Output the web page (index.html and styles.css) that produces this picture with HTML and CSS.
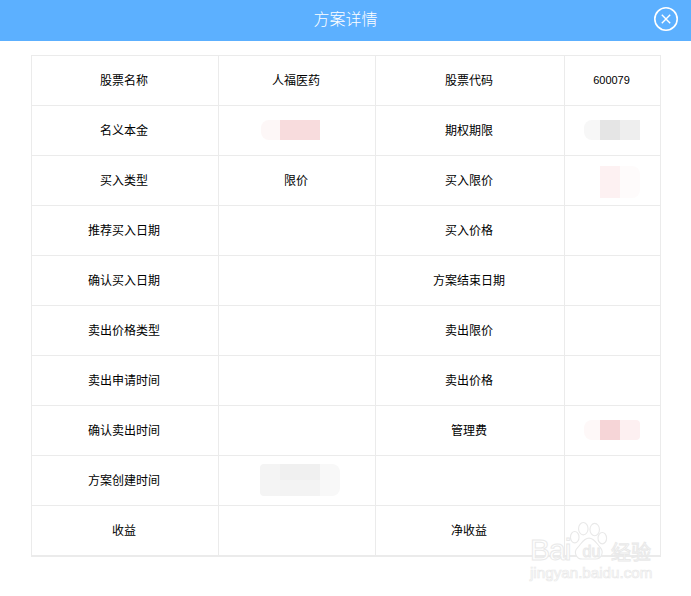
FILE: index.html
```html
<!DOCTYPE html>
<html lang="zh">
<head>
<meta charset="utf-8">
<title>方案详情</title>
<link rel="stylesheet" href="styles.css">
</head>
<body>
<div class="dialog">
  <header class="head">
    <h1 class="title">方案详情</h1>
    <button class="close" aria-label="关闭">
      <svg width="26" height="26" viewBox="0 0 26 26" fill="none" stroke="#fff">
        <circle cx="13" cy="13" r="11.2" stroke-width="1.6"/>
        <path d="M8.8 8.8 17.2 17.2M17.2 8.8 8.8 17.2" stroke-width="1.4"/>
      </svg>
    </button>
  </header>
  <table class="grid">
    <colgroup><col class="c1"><col class="c2"><col class="c3"><col class="c4"></colgroup>
    <tr><td>股票名称</td><td>人福医药</td><td>股票代码</td><td class="code">600079</td></tr>
    <tr><td>名义本金</td><td><div class="blur b-amount"><i class="t1"></i><i class="t2"></i></div></td><td>期权期限</td><td><div class="blur b-term"><i class="t1"></i><i class="t2"></i><i class="t3"></i></div></td></tr>
    <tr><td>买入类型</td><td>限价</td><td>买入限价</td><td><div class="blur b-limit"><i class="t1"></i><i class="t2"></i></div></td></tr>
    <tr><td>推荐买入日期</td><td></td><td>买入价格</td><td></td></tr>
    <tr><td>确认买入日期</td><td></td><td>方案结束日期</td><td></td></tr>
    <tr><td>卖出价格类型</td><td></td><td>卖出限价</td><td></td></tr>
    <tr><td>卖出申请时间</td><td></td><td>卖出价格</td><td></td></tr>
    <tr><td>确认卖出时间</td><td></td><td>管理费</td><td><div class="blur b-fee"><i class="t1"></i><i class="t2"></i><i class="t3"></i></div></td></tr>
    <tr><td>方案创建时间</td><td><div class="blur b-date"><i class="t1"></i><i class="t2"></i><i class="t3"></i></div></td><td></td><td></td></tr>
    <tr><td>收益</td><td></td><td>净收益</td><td></td></tr>
  </table>
</div>
<div class="mark">
  <svg class="paw" width="38" height="40" viewBox="0 0 40 42" fill="#fff" stroke="#e9e9e9" stroke-width="1.2">
    <ellipse cx="14" cy="8" rx="5" ry="6.5"/>
    <ellipse cx="26" cy="9" rx="5" ry="6.5"/>
    <ellipse cx="5" cy="17" rx="4.5" ry="6"/>
    <ellipse cx="34" cy="18" rx="4.5" ry="6"/>
    <path d="M20 18c6 0 8 6 12 10 4 5 1 12-5 12H13C7 40 3 33 8 28c4-4 6-10 12-10Z"/>
  </svg>
  <div class="mark-row"><span class="mark-bai">Bai</span><span class="mark-du">du</span><span class="mark-jy">经验</span></div>
  <div class="mark-url">jingyan.baidu.com</div>
</div>
</body>
</html>
```
FILE: styles.css
```css
* { box-sizing: border-box; }
html, body { margin: 0; padding: 0; background: #fff; }
body {
  width: 691px;
  height: 596px;
  overflow: hidden;
  position: relative;
  font-family: "Noto Sans CJK SC", "Liberation Sans", sans-serif;
  font-size: 12px;
  color: #000;
}
.head {
  height: 41px;
  background: #5cb0ff;
  display: flex;
  align-items: center;
  justify-content: center;
  position: relative;
}
.title {
  margin: 0 0 5px;
  font-size: 16px;
  font-weight: 300;
  color: #fff;
}
.close {
  position: absolute;
  left: 653px;
  top: 6px;
  width: 26px;
  height: 26px;
  padding: 0;
  border: 0;
  background: none;
  display: block;
}
.close svg { display: block; }
.grid {
  margin: 14px 0 0 31px;
  width: 630px;
  table-layout: fixed;
  border-collapse: separate;
  border-spacing: 0;
  border-top: 1px solid #ebebeb;
  border-left: 1px solid #ebebeb;
  border-bottom: 1px solid #ebebeb;
}
.c1 { width: 187px; }
.c2 { width: 157px; }
.c3 { width: 189px; }
.c4 { width: 96px; }
.grid td {
  height: 50px;
  padding: 0 2px 1px 0;
  text-align: center;
  vertical-align: middle;
  border-right: 1px solid #ebebeb;
  border-bottom: 1px solid #ebebeb;
  position: relative;
  line-height: 16px;
}
.grid .code { font-family: "Liberation Sans", sans-serif; font-size: 11px; }
.blur { position: absolute; display: flex; }
.blur i { display: block; height: 100%; }
.b-amount { left: 42px; top: 14px; height: 20px; }
.b-amount .t1 { width: 19px; background: #fdf7f7; border-radius: 8px 0 0 8px; }
.b-amount .t2 { width: 40px; background: #f8dcdd; }
.b-term { left: 19px; top: 14px; height: 20px; }
.b-term .t1 { width: 16px; background: #f7f7f7; border-radius: 8px 0 0 8px; }
.b-term .t2 { width: 20px; background: #e5e5e5; }
.b-term .t3 { width: 20px; background: #eee; }
.b-limit { left: 35px; top: 10px; height: 32px; }
.b-limit .t1 { width: 20px; background: #fdf1f2; }
.b-limit .t2 { width: 20px; background: #fefbfb; border-radius: 0 8px 8px 0; }
.b-fee { left: 19px; top: 14px; height: 20px; }
.b-fee .t1 { width: 16px; background: #fef8f8; border-radius: 8px 0 0 8px; }
.b-fee .t2 { width: 20px; background: #f6d5d7; }
.b-fee .t3 { width: 20px; background: #fdf0f1; border-radius: 0 4px 4px 0; }
.b-date { left: 41px; top: 8px; height: 32px; }
.b-date .t1 { width: 20px; background: #f4f4f4; border-radius: 4px 0 0 4px; }
.b-date .t2 { width: 40px; background: linear-gradient(#f0f0f0 50%, #f3f3f3 50%); }
.b-date .t3 { width: 20px; background: #f8f8f8; border-radius: 0 8px 8px 0; }
.mark {
  position: absolute;
  left: 530px;
  top: 520px;
  width: 124px;
  height: 62px;
}
.paw { position: absolute; left: 40px; top: 1px; }
.mark-row {
  position: absolute;
  left: 0;
  top: 15px;
  width: 124px;
  display: flex;
  align-items: baseline;
  color: #fff;
  -webkit-text-stroke: 1px #e9e9e9;
  font-family: "Liberation Sans", sans-serif;
}
.mark-bai { font-size: 30px; line-height: 30px; width: 44px; letter-spacing: -1px; }
.mark-du { font-size: 16px; line-height: 30px; width: 37px; text-align: center; position: relative; top: -3px; left: -1px; }
.mark-jy { font-size: 20px; line-height: 30px; font-family: "Noto Sans CJK SC", sans-serif; }
.mark-url {
  position: absolute;
  left: 0;
  top: 44px;
  color: #fff;
  -webkit-text-stroke: 0.7px #e9e9e9;
  font-family: "Liberation Sans", sans-serif;
  font-size: 15.2px;
  line-height: 17px;
  white-space: nowrap;
}
```
